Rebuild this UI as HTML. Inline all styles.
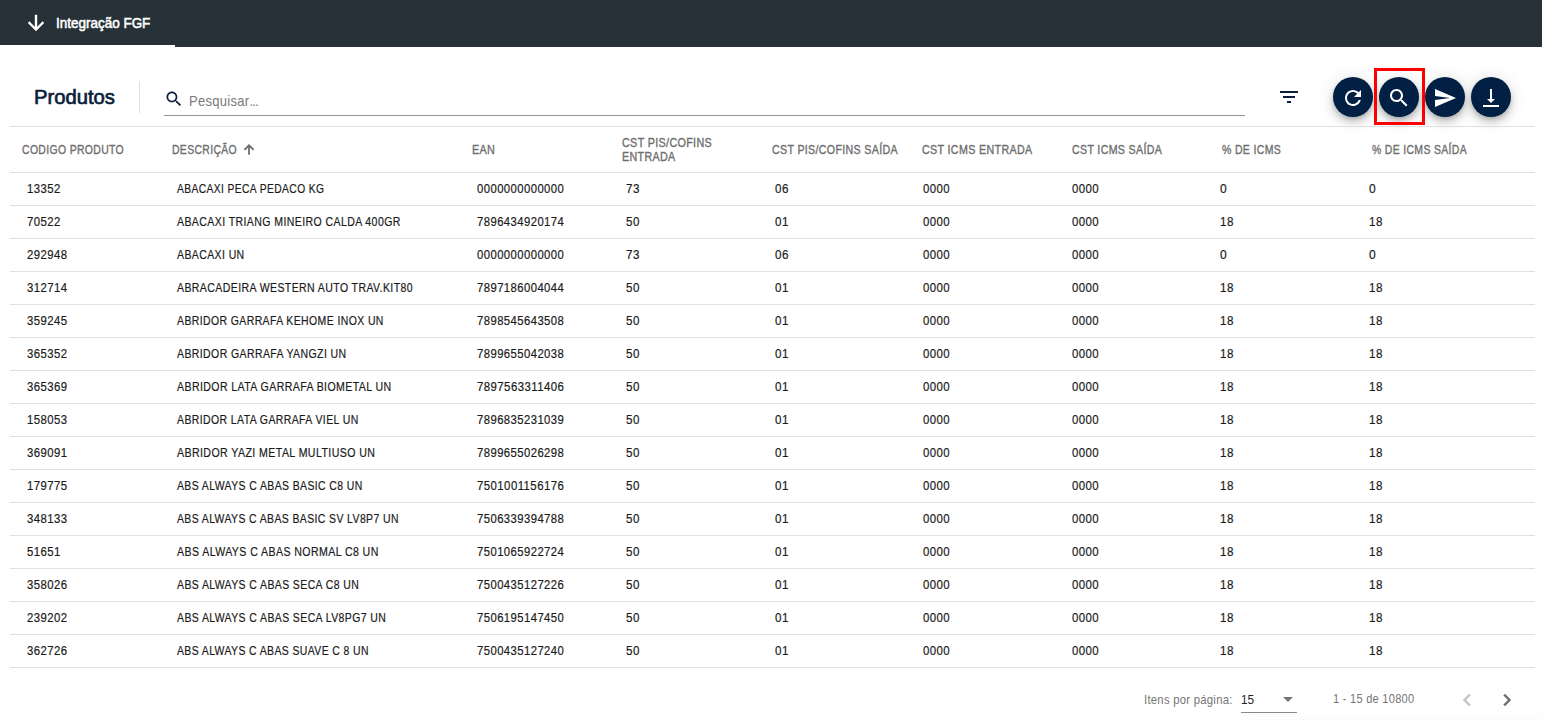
<!DOCTYPE html>
<html><head><meta charset="utf-8"><style>
html,body{margin:0;padding:0;background:#fff;width:1542px;height:721px;overflow:hidden;position:relative}
body{font-family:"Liberation Sans",sans-serif}
.t{position:absolute;white-space:nowrap;transform-origin:0 0}
.hl{position:absolute;left:10px;width:1525px;height:1px;background:#e0e0e0}
.fab{position:absolute;width:40px;height:40px;border-radius:50%;background:#012044;
box-shadow:0 3px 5px -1px rgba(0,0,0,.2),0 6px 10px 0 rgba(0,0,0,.14),0 1px 18px 0 rgba(0,0,0,.12)}
</style></head><body>
<div style="position:absolute;left:0;top:0;width:1542px;height:47px;background:#263238"></div>
<div style="position:absolute;left:0;top:45px;width:175px;height:2px;background:#fff"></div>
<svg style="position:absolute;left:24px;top:11px" width="24" height="24" viewBox="0 0 24 24"><path fill="#fff" stroke="#fff" stroke-width="0.4" d="M20 12l-1.41-1.41L13 16.17V4h-2v12.17l-5.58-5.59L4 12l8 8 8-8z"/></svg>
<div class="t" style="left:56.20px;top:14.51px;font-size:14.4px;line-height:17px;color:#fff;font-weight:normal;letter-spacing:0.0px;transform:scaleX(0.9361);-webkit-text-stroke:0.55px #fff;">Integração FGF</div>
<div class="t" style="left:34.40px;top:84.06px;font-size:20.6px;line-height:25px;color:#0a1e3c;font-weight:normal;letter-spacing:0.0px;transform:scaleX(0.9807);-webkit-text-stroke:0.7px #0a1e3c;">Produtos</div>
<div style="position:absolute;left:139px;top:81px;width:1px;height:32px;background:#e0e0e0"></div>
<svg style="position:absolute;left:164px;top:89px" width="20" height="20" viewBox="0 0 24 24"><path fill="#0b1f3d" d="M15.5 14h-.79l-.28-.27C15.41 12.59 16 11.11 16 9.5 16 5.91 13.09 3 9.5 3S3 5.91 3 9.5 5.91 16 9.5 16c1.61 0 3.09-.59 4.23-1.57l.27.28v.79l5 4.99L20.49 19l-4.99-5zm-6 0C7.01 14 5 11.99 5 9.5S7.01 5 9.5 5 14 7.01 14 9.5 11.99 14 9.5 14z"/></svg>
<div class="t" style="left:188.80px;top:92.51px;font-size:14.4px;line-height:17px;color:#7a7a7a;font-weight:normal;letter-spacing:0.3px;transform:scaleX(0.9058);">Pesquisar<span style="letter-spacing:-0.9px">..</span>.</div>
<div style="position:absolute;left:164px;top:115px;width:1081px;height:1px;background:#949494"></div>
<svg style="position:absolute;left:1277px;top:85px" width="24" height="24" viewBox="0 0 24 24"><path fill="#0b1f3d" d="M10 18h4v-2h-4v2zM3 6v2h18V6H3zm3 7h12v-2H6v2z"/></svg>
<div class="fab" style="left:1333px;top:77px"></div>
<svg style="position:absolute;left:1341px;top:86px" width="24" height="24" viewBox="0 0 24 24"><path fill="#fff" d="M17.65 6.35C16.2 4.9 14.21 4 12 4c-4.42 0-7.99 3.58-7.99 8s3.57 8 7.99 8c3.73 0 6.84-2.55 7.73-6h-2.08c-.82 2.33-3.04 4-5.65 4-3.31 0-6-2.69-6-6s2.69-6 6-6c1.66 0 3.14.69 4.22 1.78L13 11h7V4l-2.35 2.35z"/></svg>
<div class="fab" style="left:1379px;top:77px"></div>
<svg style="position:absolute;left:1387px;top:86px" width="24" height="24" viewBox="0 0 24 24"><path fill="#fff" d="M15.5 14h-.79l-.28-.27C15.41 12.59 16 11.11 16 9.5 16 5.91 13.09 3 9.5 3S3 5.91 3 9.5 5.91 16 9.5 16c1.61 0 3.09-.59 4.23-1.57l.27.28v.79l5 4.99L20.49 19l-4.99-5zm-6 0C7.01 14 5 11.99 5 9.5S7.01 5 9.5 5 14 7.01 14 9.5 11.99 14 9.5 14z"/></svg>
<div class="fab" style="left:1425px;top:77px"></div>
<svg style="position:absolute;left:1433px;top:86px" width="24" height="24" viewBox="0 0 24 24"><path fill="#fff" d="M2.01 21L23 12 2.01 3 2 10l15 2-15 2z"/></svg>
<div class="fab" style="left:1471px;top:77px"></div>
<svg style="position:absolute;left:1479px;top:86px" width="24" height="24" viewBox="0 0 24 24"><path fill="#fff" d="M16 13h-3V3h-2v10H8l4 4 4-4zM4 19v2h16v-2H4z"/></svg>
<div style="position:absolute;left:1290px;top:47px;width:252px;height:20px;background:#fff"></div>
<div style="position:absolute;left:1373.5px;top:68px;width:51px;height:56.5px;box-sizing:border-box;border:3px solid #f00"></div>
<div class="hl" style="top:126px"></div>
<div class="hl" style="top:172px"></div>
<div class="hl" style="top:205px"></div>
<div class="hl" style="top:238px"></div>
<div class="hl" style="top:271px"></div>
<div class="hl" style="top:304px"></div>
<div class="hl" style="top:337px"></div>
<div class="hl" style="top:370px"></div>
<div class="hl" style="top:403px"></div>
<div class="hl" style="top:436px"></div>
<div class="hl" style="top:469px"></div>
<div class="hl" style="top:502px"></div>
<div class="hl" style="top:535px"></div>
<div class="hl" style="top:568px"></div>
<div class="hl" style="top:601px"></div>
<div class="hl" style="top:634px"></div>
<div class="hl" style="top:667px"></div>
<div class="t" style="left:22.00px;top:142.70px;font-size:12.4px;line-height:15px;color:#6e6e6e;font-weight:normal;letter-spacing:0.4px;transform:scaleX(0.8430);-webkit-text-stroke:0.35px #6e6e6e;">CODIGO PRODUTO</div>
<div class="t" style="left:172.00px;top:142.70px;font-size:12.4px;line-height:15px;color:#6e6e6e;font-weight:normal;letter-spacing:0.4px;transform:scaleX(0.8408);-webkit-text-stroke:0.35px #6e6e6e;">DESCRIÇÃO</div>
<div class="t" style="left:472.00px;top:142.70px;font-size:12.4px;line-height:15px;color:#6e6e6e;font-weight:normal;letter-spacing:0.4px;transform:scaleX(0.8723);-webkit-text-stroke:0.35px #6e6e6e;">EAN</div>
<div class="t" style="left:622.00px;top:135.70px;font-size:12.4px;line-height:15px;color:#6e6e6e;font-weight:normal;letter-spacing:0.4px;transform:scaleX(0.8677);-webkit-text-stroke:0.35px #6e6e6e;">CST PIS/COFINS</div>
<div class="t" style="left:622.00px;top:149.70px;font-size:12.4px;line-height:15px;color:#6e6e6e;font-weight:normal;letter-spacing:0.4px;transform:scaleX(0.8642);-webkit-text-stroke:0.35px #6e6e6e;">ENTRADA</div>
<div class="t" style="left:772.00px;top:142.70px;font-size:12.4px;line-height:15px;color:#6e6e6e;font-weight:normal;letter-spacing:0.4px;transform:scaleX(0.8575);-webkit-text-stroke:0.35px #6e6e6e;">CST PIS/COFINS SAÍDA</div>
<div class="t" style="left:922.00px;top:142.70px;font-size:12.4px;line-height:15px;color:#6e6e6e;font-weight:normal;letter-spacing:0.4px;transform:scaleX(0.8631);-webkit-text-stroke:0.35px #6e6e6e;">CST ICMS ENTRADA</div>
<div class="t" style="left:1072.00px;top:142.70px;font-size:12.4px;line-height:15px;color:#6e6e6e;font-weight:normal;letter-spacing:0.4px;transform:scaleX(0.8571);-webkit-text-stroke:0.35px #6e6e6e;">CST ICMS SAÍDA</div>
<div class="t" style="left:1222.00px;top:142.70px;font-size:12.4px;line-height:15px;color:#6e6e6e;font-weight:normal;letter-spacing:0.4px;transform:scaleX(0.8482);-webkit-text-stroke:0.35px #6e6e6e;">% DE ICMS</div>
<div class="t" style="left:1372.00px;top:142.70px;font-size:12.4px;line-height:15px;color:#6e6e6e;font-weight:normal;letter-spacing:0.4px;transform:scaleX(0.8423);-webkit-text-stroke:0.35px #6e6e6e;">% DE ICMS SAÍDA</div>
<svg style="position:absolute;left:236px;top:140px" width="24" height="20" viewBox="0 0 24 20"><path fill="#6e6e6e" d="M13 3.9L18.3 9.2 16.9 10.6 13.9 7.6V14.8H12.1V7.6L9.1 10.6 7.7 9.2z"/></svg>
<div class="t" style="left:26.50px;top:180.50px;font-size:13px;line-height:16px;color:#1a1a1a;font-weight:normal;letter-spacing:0.5px;transform:scaleX(0.8753);-webkit-text-stroke:0.2px #1a1a1a;">13352</div>
<div class="t" style="left:177.00px;top:180.50px;font-size:13px;line-height:16px;color:#1a1a1a;font-weight:normal;letter-spacing:0.5px;transform:scaleX(0.7904);-webkit-text-stroke:0.2px #1a1a1a;">ABACAXI PECA PEDACO KG</div>
<div class="t" style="left:476.50px;top:180.50px;font-size:13px;line-height:16px;color:#1a1a1a;font-weight:normal;letter-spacing:0.5px;transform:scaleX(0.8683);-webkit-text-stroke:0.2px #1a1a1a;">0000000000000</div>
<div class="t" style="left:625.50px;top:180.50px;font-size:13px;line-height:16px;color:#1a1a1a;font-weight:normal;letter-spacing:0.5px;transform:scaleX(0.8928);-webkit-text-stroke:0.2px #1a1a1a;">73</div>
<div class="t" style="left:774.50px;top:180.50px;font-size:13px;line-height:16px;color:#1a1a1a;font-weight:normal;letter-spacing:0.5px;transform:scaleX(0.8928);-webkit-text-stroke:0.2px #1a1a1a;">06</div>
<div class="t" style="left:923.00px;top:180.50px;font-size:13px;line-height:16px;color:#1a1a1a;font-weight:normal;letter-spacing:0.5px;transform:scaleX(0.8781);-webkit-text-stroke:0.2px #1a1a1a;">0000</div>
<div class="t" style="left:1071.50px;top:180.50px;font-size:13px;line-height:16px;color:#1a1a1a;font-weight:normal;letter-spacing:0.5px;transform:scaleX(0.8781);-webkit-text-stroke:0.2px #1a1a1a;">0000</div>
<div class="t" style="left:1220.30px;top:180.50px;font-size:13px;line-height:16px;color:#1a1a1a;font-weight:normal;letter-spacing:0.5px;transform:scaleX(0.9237);-webkit-text-stroke:0.2px #1a1a1a;">0</div>
<div class="t" style="left:1369.30px;top:180.50px;font-size:13px;line-height:16px;color:#1a1a1a;font-weight:normal;letter-spacing:0.5px;transform:scaleX(0.9237);-webkit-text-stroke:0.2px #1a1a1a;">0</div>
<div class="t" style="left:26.50px;top:213.50px;font-size:13px;line-height:16px;color:#1a1a1a;font-weight:normal;letter-spacing:0.5px;transform:scaleX(0.8753);-webkit-text-stroke:0.2px #1a1a1a;">70522</div>
<div class="t" style="left:177.00px;top:213.50px;font-size:13px;line-height:16px;color:#1a1a1a;font-weight:normal;letter-spacing:0.5px;transform:scaleX(0.8104);-webkit-text-stroke:0.2px #1a1a1a;">ABACAXI TRIANG MINEIRO CALDA 400GR</div>
<div class="t" style="left:476.50px;top:213.50px;font-size:13px;line-height:16px;color:#1a1a1a;font-weight:normal;letter-spacing:0.5px;transform:scaleX(0.8683);-webkit-text-stroke:0.2px #1a1a1a;">7896434920174</div>
<div class="t" style="left:625.50px;top:213.50px;font-size:13px;line-height:16px;color:#1a1a1a;font-weight:normal;letter-spacing:0.5px;transform:scaleX(0.8928);-webkit-text-stroke:0.2px #1a1a1a;">50</div>
<div class="t" style="left:774.50px;top:213.50px;font-size:13px;line-height:16px;color:#1a1a1a;font-weight:normal;letter-spacing:0.5px;transform:scaleX(0.8928);-webkit-text-stroke:0.2px #1a1a1a;">01</div>
<div class="t" style="left:923.00px;top:213.50px;font-size:13px;line-height:16px;color:#1a1a1a;font-weight:normal;letter-spacing:0.5px;transform:scaleX(0.8781);-webkit-text-stroke:0.2px #1a1a1a;">0000</div>
<div class="t" style="left:1071.50px;top:213.50px;font-size:13px;line-height:16px;color:#1a1a1a;font-weight:normal;letter-spacing:0.5px;transform:scaleX(0.8781);-webkit-text-stroke:0.2px #1a1a1a;">0000</div>
<div class="t" style="left:1220.30px;top:213.50px;font-size:13px;line-height:16px;color:#1a1a1a;font-weight:normal;letter-spacing:0.5px;transform:scaleX(0.8928);-webkit-text-stroke:0.2px #1a1a1a;">18</div>
<div class="t" style="left:1369.30px;top:213.50px;font-size:13px;line-height:16px;color:#1a1a1a;font-weight:normal;letter-spacing:0.5px;transform:scaleX(0.8928);-webkit-text-stroke:0.2px #1a1a1a;">18</div>
<div class="t" style="left:26.50px;top:246.50px;font-size:13px;line-height:16px;color:#1a1a1a;font-weight:normal;letter-spacing:0.5px;transform:scaleX(0.8734);-webkit-text-stroke:0.2px #1a1a1a;">292948</div>
<div class="t" style="left:177.00px;top:246.50px;font-size:13px;line-height:16px;color:#1a1a1a;font-weight:normal;letter-spacing:0.5px;transform:scaleX(0.8073);-webkit-text-stroke:0.2px #1a1a1a;">ABACAXI UN</div>
<div class="t" style="left:476.50px;top:246.50px;font-size:13px;line-height:16px;color:#1a1a1a;font-weight:normal;letter-spacing:0.5px;transform:scaleX(0.8683);-webkit-text-stroke:0.2px #1a1a1a;">0000000000000</div>
<div class="t" style="left:625.50px;top:246.50px;font-size:13px;line-height:16px;color:#1a1a1a;font-weight:normal;letter-spacing:0.5px;transform:scaleX(0.8928);-webkit-text-stroke:0.2px #1a1a1a;">73</div>
<div class="t" style="left:774.50px;top:246.50px;font-size:13px;line-height:16px;color:#1a1a1a;font-weight:normal;letter-spacing:0.5px;transform:scaleX(0.8928);-webkit-text-stroke:0.2px #1a1a1a;">06</div>
<div class="t" style="left:923.00px;top:246.50px;font-size:13px;line-height:16px;color:#1a1a1a;font-weight:normal;letter-spacing:0.5px;transform:scaleX(0.8781);-webkit-text-stroke:0.2px #1a1a1a;">0000</div>
<div class="t" style="left:1071.50px;top:246.50px;font-size:13px;line-height:16px;color:#1a1a1a;font-weight:normal;letter-spacing:0.5px;transform:scaleX(0.8781);-webkit-text-stroke:0.2px #1a1a1a;">0000</div>
<div class="t" style="left:1220.30px;top:246.50px;font-size:13px;line-height:16px;color:#1a1a1a;font-weight:normal;letter-spacing:0.5px;transform:scaleX(0.9237);-webkit-text-stroke:0.2px #1a1a1a;">0</div>
<div class="t" style="left:1369.30px;top:246.50px;font-size:13px;line-height:16px;color:#1a1a1a;font-weight:normal;letter-spacing:0.5px;transform:scaleX(0.9237);-webkit-text-stroke:0.2px #1a1a1a;">0</div>
<div class="t" style="left:26.50px;top:279.50px;font-size:13px;line-height:16px;color:#1a1a1a;font-weight:normal;letter-spacing:0.5px;transform:scaleX(0.8734);-webkit-text-stroke:0.2px #1a1a1a;">312714</div>
<div class="t" style="left:177.00px;top:279.50px;font-size:13px;line-height:16px;color:#1a1a1a;font-weight:normal;letter-spacing:0.5px;transform:scaleX(0.8094);-webkit-text-stroke:0.2px #1a1a1a;">ABRACADEIRA WESTERN AUTO TRAV.KIT80</div>
<div class="t" style="left:476.50px;top:279.50px;font-size:13px;line-height:16px;color:#1a1a1a;font-weight:normal;letter-spacing:0.5px;transform:scaleX(0.8683);-webkit-text-stroke:0.2px #1a1a1a;">7897186004044</div>
<div class="t" style="left:625.50px;top:279.50px;font-size:13px;line-height:16px;color:#1a1a1a;font-weight:normal;letter-spacing:0.5px;transform:scaleX(0.8928);-webkit-text-stroke:0.2px #1a1a1a;">50</div>
<div class="t" style="left:774.50px;top:279.50px;font-size:13px;line-height:16px;color:#1a1a1a;font-weight:normal;letter-spacing:0.5px;transform:scaleX(0.8928);-webkit-text-stroke:0.2px #1a1a1a;">01</div>
<div class="t" style="left:923.00px;top:279.50px;font-size:13px;line-height:16px;color:#1a1a1a;font-weight:normal;letter-spacing:0.5px;transform:scaleX(0.8781);-webkit-text-stroke:0.2px #1a1a1a;">0000</div>
<div class="t" style="left:1071.50px;top:279.50px;font-size:13px;line-height:16px;color:#1a1a1a;font-weight:normal;letter-spacing:0.5px;transform:scaleX(0.8781);-webkit-text-stroke:0.2px #1a1a1a;">0000</div>
<div class="t" style="left:1220.30px;top:279.50px;font-size:13px;line-height:16px;color:#1a1a1a;font-weight:normal;letter-spacing:0.5px;transform:scaleX(0.8928);-webkit-text-stroke:0.2px #1a1a1a;">18</div>
<div class="t" style="left:1369.30px;top:279.50px;font-size:13px;line-height:16px;color:#1a1a1a;font-weight:normal;letter-spacing:0.5px;transform:scaleX(0.8928);-webkit-text-stroke:0.2px #1a1a1a;">18</div>
<div class="t" style="left:26.50px;top:312.50px;font-size:13px;line-height:16px;color:#1a1a1a;font-weight:normal;letter-spacing:0.5px;transform:scaleX(0.8734);-webkit-text-stroke:0.2px #1a1a1a;">359245</div>
<div class="t" style="left:177.00px;top:312.50px;font-size:13px;line-height:16px;color:#1a1a1a;font-weight:normal;letter-spacing:0.5px;transform:scaleX(0.8047);-webkit-text-stroke:0.2px #1a1a1a;">ABRIDOR GARRAFA KEHOME INOX UN</div>
<div class="t" style="left:476.50px;top:312.50px;font-size:13px;line-height:16px;color:#1a1a1a;font-weight:normal;letter-spacing:0.5px;transform:scaleX(0.8683);-webkit-text-stroke:0.2px #1a1a1a;">7898545643508</div>
<div class="t" style="left:625.50px;top:312.50px;font-size:13px;line-height:16px;color:#1a1a1a;font-weight:normal;letter-spacing:0.5px;transform:scaleX(0.8928);-webkit-text-stroke:0.2px #1a1a1a;">50</div>
<div class="t" style="left:774.50px;top:312.50px;font-size:13px;line-height:16px;color:#1a1a1a;font-weight:normal;letter-spacing:0.5px;transform:scaleX(0.8928);-webkit-text-stroke:0.2px #1a1a1a;">01</div>
<div class="t" style="left:923.00px;top:312.50px;font-size:13px;line-height:16px;color:#1a1a1a;font-weight:normal;letter-spacing:0.5px;transform:scaleX(0.8781);-webkit-text-stroke:0.2px #1a1a1a;">0000</div>
<div class="t" style="left:1071.50px;top:312.50px;font-size:13px;line-height:16px;color:#1a1a1a;font-weight:normal;letter-spacing:0.5px;transform:scaleX(0.8781);-webkit-text-stroke:0.2px #1a1a1a;">0000</div>
<div class="t" style="left:1220.30px;top:312.50px;font-size:13px;line-height:16px;color:#1a1a1a;font-weight:normal;letter-spacing:0.5px;transform:scaleX(0.8928);-webkit-text-stroke:0.2px #1a1a1a;">18</div>
<div class="t" style="left:1369.30px;top:312.50px;font-size:13px;line-height:16px;color:#1a1a1a;font-weight:normal;letter-spacing:0.5px;transform:scaleX(0.8928);-webkit-text-stroke:0.2px #1a1a1a;">18</div>
<div class="t" style="left:26.50px;top:345.50px;font-size:13px;line-height:16px;color:#1a1a1a;font-weight:normal;letter-spacing:0.5px;transform:scaleX(0.8734);-webkit-text-stroke:0.2px #1a1a1a;">365352</div>
<div class="t" style="left:177.00px;top:345.50px;font-size:13px;line-height:16px;color:#1a1a1a;font-weight:normal;letter-spacing:0.5px;transform:scaleX(0.8073);-webkit-text-stroke:0.2px #1a1a1a;">ABRIDOR GARRAFA YANGZI UN</div>
<div class="t" style="left:476.50px;top:345.50px;font-size:13px;line-height:16px;color:#1a1a1a;font-weight:normal;letter-spacing:0.5px;transform:scaleX(0.8683);-webkit-text-stroke:0.2px #1a1a1a;">7899655042038</div>
<div class="t" style="left:625.50px;top:345.50px;font-size:13px;line-height:16px;color:#1a1a1a;font-weight:normal;letter-spacing:0.5px;transform:scaleX(0.8928);-webkit-text-stroke:0.2px #1a1a1a;">50</div>
<div class="t" style="left:774.50px;top:345.50px;font-size:13px;line-height:16px;color:#1a1a1a;font-weight:normal;letter-spacing:0.5px;transform:scaleX(0.8928);-webkit-text-stroke:0.2px #1a1a1a;">01</div>
<div class="t" style="left:923.00px;top:345.50px;font-size:13px;line-height:16px;color:#1a1a1a;font-weight:normal;letter-spacing:0.5px;transform:scaleX(0.8781);-webkit-text-stroke:0.2px #1a1a1a;">0000</div>
<div class="t" style="left:1071.50px;top:345.50px;font-size:13px;line-height:16px;color:#1a1a1a;font-weight:normal;letter-spacing:0.5px;transform:scaleX(0.8781);-webkit-text-stroke:0.2px #1a1a1a;">0000</div>
<div class="t" style="left:1220.30px;top:345.50px;font-size:13px;line-height:16px;color:#1a1a1a;font-weight:normal;letter-spacing:0.5px;transform:scaleX(0.8928);-webkit-text-stroke:0.2px #1a1a1a;">18</div>
<div class="t" style="left:1369.30px;top:345.50px;font-size:13px;line-height:16px;color:#1a1a1a;font-weight:normal;letter-spacing:0.5px;transform:scaleX(0.8928);-webkit-text-stroke:0.2px #1a1a1a;">18</div>
<div class="t" style="left:26.50px;top:378.50px;font-size:13px;line-height:16px;color:#1a1a1a;font-weight:normal;letter-spacing:0.5px;transform:scaleX(0.8734);-webkit-text-stroke:0.2px #1a1a1a;">365369</div>
<div class="t" style="left:177.00px;top:378.50px;font-size:13px;line-height:16px;color:#1a1a1a;font-weight:normal;letter-spacing:0.5px;transform:scaleX(0.8126);-webkit-text-stroke:0.2px #1a1a1a;">ABRIDOR LATA GARRAFA BIOMETAL UN</div>
<div class="t" style="left:476.50px;top:378.50px;font-size:13px;line-height:16px;color:#1a1a1a;font-weight:normal;letter-spacing:0.5px;transform:scaleX(0.8767);-webkit-text-stroke:0.2px #1a1a1a;">7897563311406</div>
<div class="t" style="left:625.50px;top:378.50px;font-size:13px;line-height:16px;color:#1a1a1a;font-weight:normal;letter-spacing:0.5px;transform:scaleX(0.8928);-webkit-text-stroke:0.2px #1a1a1a;">50</div>
<div class="t" style="left:774.50px;top:378.50px;font-size:13px;line-height:16px;color:#1a1a1a;font-weight:normal;letter-spacing:0.5px;transform:scaleX(0.8928);-webkit-text-stroke:0.2px #1a1a1a;">01</div>
<div class="t" style="left:923.00px;top:378.50px;font-size:13px;line-height:16px;color:#1a1a1a;font-weight:normal;letter-spacing:0.5px;transform:scaleX(0.8781);-webkit-text-stroke:0.2px #1a1a1a;">0000</div>
<div class="t" style="left:1071.50px;top:378.50px;font-size:13px;line-height:16px;color:#1a1a1a;font-weight:normal;letter-spacing:0.5px;transform:scaleX(0.8781);-webkit-text-stroke:0.2px #1a1a1a;">0000</div>
<div class="t" style="left:1220.30px;top:378.50px;font-size:13px;line-height:16px;color:#1a1a1a;font-weight:normal;letter-spacing:0.5px;transform:scaleX(0.8928);-webkit-text-stroke:0.2px #1a1a1a;">18</div>
<div class="t" style="left:1369.30px;top:378.50px;font-size:13px;line-height:16px;color:#1a1a1a;font-weight:normal;letter-spacing:0.5px;transform:scaleX(0.8928);-webkit-text-stroke:0.2px #1a1a1a;">18</div>
<div class="t" style="left:26.50px;top:411.50px;font-size:13px;line-height:16px;color:#1a1a1a;font-weight:normal;letter-spacing:0.5px;transform:scaleX(0.8734);-webkit-text-stroke:0.2px #1a1a1a;">158053</div>
<div class="t" style="left:177.00px;top:411.50px;font-size:13px;line-height:16px;color:#1a1a1a;font-weight:normal;letter-spacing:0.5px;transform:scaleX(0.8058);-webkit-text-stroke:0.2px #1a1a1a;">ABRIDOR LATA GARRAFA VIEL UN</div>
<div class="t" style="left:476.50px;top:411.50px;font-size:13px;line-height:16px;color:#1a1a1a;font-weight:normal;letter-spacing:0.5px;transform:scaleX(0.8683);-webkit-text-stroke:0.2px #1a1a1a;">7896835231039</div>
<div class="t" style="left:625.50px;top:411.50px;font-size:13px;line-height:16px;color:#1a1a1a;font-weight:normal;letter-spacing:0.5px;transform:scaleX(0.8928);-webkit-text-stroke:0.2px #1a1a1a;">50</div>
<div class="t" style="left:774.50px;top:411.50px;font-size:13px;line-height:16px;color:#1a1a1a;font-weight:normal;letter-spacing:0.5px;transform:scaleX(0.8928);-webkit-text-stroke:0.2px #1a1a1a;">01</div>
<div class="t" style="left:923.00px;top:411.50px;font-size:13px;line-height:16px;color:#1a1a1a;font-weight:normal;letter-spacing:0.5px;transform:scaleX(0.8781);-webkit-text-stroke:0.2px #1a1a1a;">0000</div>
<div class="t" style="left:1071.50px;top:411.50px;font-size:13px;line-height:16px;color:#1a1a1a;font-weight:normal;letter-spacing:0.5px;transform:scaleX(0.8781);-webkit-text-stroke:0.2px #1a1a1a;">0000</div>
<div class="t" style="left:1220.30px;top:411.50px;font-size:13px;line-height:16px;color:#1a1a1a;font-weight:normal;letter-spacing:0.5px;transform:scaleX(0.8928);-webkit-text-stroke:0.2px #1a1a1a;">18</div>
<div class="t" style="left:1369.30px;top:411.50px;font-size:13px;line-height:16px;color:#1a1a1a;font-weight:normal;letter-spacing:0.5px;transform:scaleX(0.8928);-webkit-text-stroke:0.2px #1a1a1a;">18</div>
<div class="t" style="left:26.50px;top:444.50px;font-size:13px;line-height:16px;color:#1a1a1a;font-weight:normal;letter-spacing:0.5px;transform:scaleX(0.8734);-webkit-text-stroke:0.2px #1a1a1a;">369091</div>
<div class="t" style="left:177.00px;top:444.50px;font-size:13px;line-height:16px;color:#1a1a1a;font-weight:normal;letter-spacing:0.5px;transform:scaleX(0.8155);-webkit-text-stroke:0.2px #1a1a1a;">ABRIDOR YAZI METAL MULTIUSO UN</div>
<div class="t" style="left:476.50px;top:444.50px;font-size:13px;line-height:16px;color:#1a1a1a;font-weight:normal;letter-spacing:0.5px;transform:scaleX(0.8683);-webkit-text-stroke:0.2px #1a1a1a;">7899655026298</div>
<div class="t" style="left:625.50px;top:444.50px;font-size:13px;line-height:16px;color:#1a1a1a;font-weight:normal;letter-spacing:0.5px;transform:scaleX(0.8928);-webkit-text-stroke:0.2px #1a1a1a;">50</div>
<div class="t" style="left:774.50px;top:444.50px;font-size:13px;line-height:16px;color:#1a1a1a;font-weight:normal;letter-spacing:0.5px;transform:scaleX(0.8928);-webkit-text-stroke:0.2px #1a1a1a;">01</div>
<div class="t" style="left:923.00px;top:444.50px;font-size:13px;line-height:16px;color:#1a1a1a;font-weight:normal;letter-spacing:0.5px;transform:scaleX(0.8781);-webkit-text-stroke:0.2px #1a1a1a;">0000</div>
<div class="t" style="left:1071.50px;top:444.50px;font-size:13px;line-height:16px;color:#1a1a1a;font-weight:normal;letter-spacing:0.5px;transform:scaleX(0.8781);-webkit-text-stroke:0.2px #1a1a1a;">0000</div>
<div class="t" style="left:1220.30px;top:444.50px;font-size:13px;line-height:16px;color:#1a1a1a;font-weight:normal;letter-spacing:0.5px;transform:scaleX(0.8928);-webkit-text-stroke:0.2px #1a1a1a;">18</div>
<div class="t" style="left:1369.30px;top:444.50px;font-size:13px;line-height:16px;color:#1a1a1a;font-weight:normal;letter-spacing:0.5px;transform:scaleX(0.8928);-webkit-text-stroke:0.2px #1a1a1a;">18</div>
<div class="t" style="left:26.50px;top:477.50px;font-size:13px;line-height:16px;color:#1a1a1a;font-weight:normal;letter-spacing:0.5px;transform:scaleX(0.8734);-webkit-text-stroke:0.2px #1a1a1a;">179775</div>
<div class="t" style="left:177.00px;top:477.50px;font-size:13px;line-height:16px;color:#1a1a1a;font-weight:normal;letter-spacing:0.5px;transform:scaleX(0.8041);-webkit-text-stroke:0.2px #1a1a1a;">ABS ALWAYS C ABAS BASIC C8 UN</div>
<div class="t" style="left:476.50px;top:477.50px;font-size:13px;line-height:16px;color:#1a1a1a;font-weight:normal;letter-spacing:0.5px;transform:scaleX(0.8767);-webkit-text-stroke:0.2px #1a1a1a;">7501001156176</div>
<div class="t" style="left:625.50px;top:477.50px;font-size:13px;line-height:16px;color:#1a1a1a;font-weight:normal;letter-spacing:0.5px;transform:scaleX(0.8928);-webkit-text-stroke:0.2px #1a1a1a;">50</div>
<div class="t" style="left:774.50px;top:477.50px;font-size:13px;line-height:16px;color:#1a1a1a;font-weight:normal;letter-spacing:0.5px;transform:scaleX(0.8928);-webkit-text-stroke:0.2px #1a1a1a;">01</div>
<div class="t" style="left:923.00px;top:477.50px;font-size:13px;line-height:16px;color:#1a1a1a;font-weight:normal;letter-spacing:0.5px;transform:scaleX(0.8781);-webkit-text-stroke:0.2px #1a1a1a;">0000</div>
<div class="t" style="left:1071.50px;top:477.50px;font-size:13px;line-height:16px;color:#1a1a1a;font-weight:normal;letter-spacing:0.5px;transform:scaleX(0.8781);-webkit-text-stroke:0.2px #1a1a1a;">0000</div>
<div class="t" style="left:1220.30px;top:477.50px;font-size:13px;line-height:16px;color:#1a1a1a;font-weight:normal;letter-spacing:0.5px;transform:scaleX(0.8928);-webkit-text-stroke:0.2px #1a1a1a;">18</div>
<div class="t" style="left:1369.30px;top:477.50px;font-size:13px;line-height:16px;color:#1a1a1a;font-weight:normal;letter-spacing:0.5px;transform:scaleX(0.8928);-webkit-text-stroke:0.2px #1a1a1a;">18</div>
<div class="t" style="left:26.50px;top:510.50px;font-size:13px;line-height:16px;color:#1a1a1a;font-weight:normal;letter-spacing:0.5px;transform:scaleX(0.8734);-webkit-text-stroke:0.2px #1a1a1a;">348133</div>
<div class="t" style="left:177.00px;top:510.50px;font-size:13px;line-height:16px;color:#1a1a1a;font-weight:normal;letter-spacing:0.5px;transform:scaleX(0.8025);-webkit-text-stroke:0.2px #1a1a1a;">ABS ALWAYS C ABAS BASIC SV LV8P7 UN</div>
<div class="t" style="left:476.50px;top:510.50px;font-size:13px;line-height:16px;color:#1a1a1a;font-weight:normal;letter-spacing:0.5px;transform:scaleX(0.8683);-webkit-text-stroke:0.2px #1a1a1a;">7506339394788</div>
<div class="t" style="left:625.50px;top:510.50px;font-size:13px;line-height:16px;color:#1a1a1a;font-weight:normal;letter-spacing:0.5px;transform:scaleX(0.8928);-webkit-text-stroke:0.2px #1a1a1a;">50</div>
<div class="t" style="left:774.50px;top:510.50px;font-size:13px;line-height:16px;color:#1a1a1a;font-weight:normal;letter-spacing:0.5px;transform:scaleX(0.8928);-webkit-text-stroke:0.2px #1a1a1a;">01</div>
<div class="t" style="left:923.00px;top:510.50px;font-size:13px;line-height:16px;color:#1a1a1a;font-weight:normal;letter-spacing:0.5px;transform:scaleX(0.8781);-webkit-text-stroke:0.2px #1a1a1a;">0000</div>
<div class="t" style="left:1071.50px;top:510.50px;font-size:13px;line-height:16px;color:#1a1a1a;font-weight:normal;letter-spacing:0.5px;transform:scaleX(0.8781);-webkit-text-stroke:0.2px #1a1a1a;">0000</div>
<div class="t" style="left:1220.30px;top:510.50px;font-size:13px;line-height:16px;color:#1a1a1a;font-weight:normal;letter-spacing:0.5px;transform:scaleX(0.8928);-webkit-text-stroke:0.2px #1a1a1a;">18</div>
<div class="t" style="left:1369.30px;top:510.50px;font-size:13px;line-height:16px;color:#1a1a1a;font-weight:normal;letter-spacing:0.5px;transform:scaleX(0.8928);-webkit-text-stroke:0.2px #1a1a1a;">18</div>
<div class="t" style="left:26.50px;top:543.50px;font-size:13px;line-height:16px;color:#1a1a1a;font-weight:normal;letter-spacing:0.5px;transform:scaleX(0.8753);-webkit-text-stroke:0.2px #1a1a1a;">51651</div>
<div class="t" style="left:177.00px;top:543.50px;font-size:13px;line-height:16px;color:#1a1a1a;font-weight:normal;letter-spacing:0.5px;transform:scaleX(0.8146);-webkit-text-stroke:0.2px #1a1a1a;">ABS ALWAYS C ABAS NORMAL C8 UN</div>
<div class="t" style="left:476.50px;top:543.50px;font-size:13px;line-height:16px;color:#1a1a1a;font-weight:normal;letter-spacing:0.5px;transform:scaleX(0.8683);-webkit-text-stroke:0.2px #1a1a1a;">7501065922724</div>
<div class="t" style="left:625.50px;top:543.50px;font-size:13px;line-height:16px;color:#1a1a1a;font-weight:normal;letter-spacing:0.5px;transform:scaleX(0.8928);-webkit-text-stroke:0.2px #1a1a1a;">50</div>
<div class="t" style="left:774.50px;top:543.50px;font-size:13px;line-height:16px;color:#1a1a1a;font-weight:normal;letter-spacing:0.5px;transform:scaleX(0.8928);-webkit-text-stroke:0.2px #1a1a1a;">01</div>
<div class="t" style="left:923.00px;top:543.50px;font-size:13px;line-height:16px;color:#1a1a1a;font-weight:normal;letter-spacing:0.5px;transform:scaleX(0.8781);-webkit-text-stroke:0.2px #1a1a1a;">0000</div>
<div class="t" style="left:1071.50px;top:543.50px;font-size:13px;line-height:16px;color:#1a1a1a;font-weight:normal;letter-spacing:0.5px;transform:scaleX(0.8781);-webkit-text-stroke:0.2px #1a1a1a;">0000</div>
<div class="t" style="left:1220.30px;top:543.50px;font-size:13px;line-height:16px;color:#1a1a1a;font-weight:normal;letter-spacing:0.5px;transform:scaleX(0.8928);-webkit-text-stroke:0.2px #1a1a1a;">18</div>
<div class="t" style="left:1369.30px;top:543.50px;font-size:13px;line-height:16px;color:#1a1a1a;font-weight:normal;letter-spacing:0.5px;transform:scaleX(0.8928);-webkit-text-stroke:0.2px #1a1a1a;">18</div>
<div class="t" style="left:26.50px;top:576.50px;font-size:13px;line-height:16px;color:#1a1a1a;font-weight:normal;letter-spacing:0.5px;transform:scaleX(0.8734);-webkit-text-stroke:0.2px #1a1a1a;">358026</div>
<div class="t" style="left:177.00px;top:576.50px;font-size:13px;line-height:16px;color:#1a1a1a;font-weight:normal;letter-spacing:0.5px;transform:scaleX(0.8054);-webkit-text-stroke:0.2px #1a1a1a;">ABS ALWAYS C ABAS SECA C8 UN</div>
<div class="t" style="left:476.50px;top:576.50px;font-size:13px;line-height:16px;color:#1a1a1a;font-weight:normal;letter-spacing:0.5px;transform:scaleX(0.8683);-webkit-text-stroke:0.2px #1a1a1a;">7500435127226</div>
<div class="t" style="left:625.50px;top:576.50px;font-size:13px;line-height:16px;color:#1a1a1a;font-weight:normal;letter-spacing:0.5px;transform:scaleX(0.8928);-webkit-text-stroke:0.2px #1a1a1a;">50</div>
<div class="t" style="left:774.50px;top:576.50px;font-size:13px;line-height:16px;color:#1a1a1a;font-weight:normal;letter-spacing:0.5px;transform:scaleX(0.8928);-webkit-text-stroke:0.2px #1a1a1a;">01</div>
<div class="t" style="left:923.00px;top:576.50px;font-size:13px;line-height:16px;color:#1a1a1a;font-weight:normal;letter-spacing:0.5px;transform:scaleX(0.8781);-webkit-text-stroke:0.2px #1a1a1a;">0000</div>
<div class="t" style="left:1071.50px;top:576.50px;font-size:13px;line-height:16px;color:#1a1a1a;font-weight:normal;letter-spacing:0.5px;transform:scaleX(0.8781);-webkit-text-stroke:0.2px #1a1a1a;">0000</div>
<div class="t" style="left:1220.30px;top:576.50px;font-size:13px;line-height:16px;color:#1a1a1a;font-weight:normal;letter-spacing:0.5px;transform:scaleX(0.8928);-webkit-text-stroke:0.2px #1a1a1a;">18</div>
<div class="t" style="left:1369.30px;top:576.50px;font-size:13px;line-height:16px;color:#1a1a1a;font-weight:normal;letter-spacing:0.5px;transform:scaleX(0.8928);-webkit-text-stroke:0.2px #1a1a1a;">18</div>
<div class="t" style="left:26.50px;top:609.50px;font-size:13px;line-height:16px;color:#1a1a1a;font-weight:normal;letter-spacing:0.5px;transform:scaleX(0.8734);-webkit-text-stroke:0.2px #1a1a1a;">239202</div>
<div class="t" style="left:177.00px;top:609.50px;font-size:13px;line-height:16px;color:#1a1a1a;font-weight:normal;letter-spacing:0.5px;transform:scaleX(0.8054);-webkit-text-stroke:0.2px #1a1a1a;">ABS ALWAYS C ABAS SECA LV8PG7 UN</div>
<div class="t" style="left:476.50px;top:609.50px;font-size:13px;line-height:16px;color:#1a1a1a;font-weight:normal;letter-spacing:0.5px;transform:scaleX(0.8683);-webkit-text-stroke:0.2px #1a1a1a;">7506195147450</div>
<div class="t" style="left:625.50px;top:609.50px;font-size:13px;line-height:16px;color:#1a1a1a;font-weight:normal;letter-spacing:0.5px;transform:scaleX(0.8928);-webkit-text-stroke:0.2px #1a1a1a;">50</div>
<div class="t" style="left:774.50px;top:609.50px;font-size:13px;line-height:16px;color:#1a1a1a;font-weight:normal;letter-spacing:0.5px;transform:scaleX(0.8928);-webkit-text-stroke:0.2px #1a1a1a;">01</div>
<div class="t" style="left:923.00px;top:609.50px;font-size:13px;line-height:16px;color:#1a1a1a;font-weight:normal;letter-spacing:0.5px;transform:scaleX(0.8781);-webkit-text-stroke:0.2px #1a1a1a;">0000</div>
<div class="t" style="left:1071.50px;top:609.50px;font-size:13px;line-height:16px;color:#1a1a1a;font-weight:normal;letter-spacing:0.5px;transform:scaleX(0.8781);-webkit-text-stroke:0.2px #1a1a1a;">0000</div>
<div class="t" style="left:1220.30px;top:609.50px;font-size:13px;line-height:16px;color:#1a1a1a;font-weight:normal;letter-spacing:0.5px;transform:scaleX(0.8928);-webkit-text-stroke:0.2px #1a1a1a;">18</div>
<div class="t" style="left:1369.30px;top:609.50px;font-size:13px;line-height:16px;color:#1a1a1a;font-weight:normal;letter-spacing:0.5px;transform:scaleX(0.8928);-webkit-text-stroke:0.2px #1a1a1a;">18</div>
<div class="t" style="left:26.50px;top:642.50px;font-size:13px;line-height:16px;color:#1a1a1a;font-weight:normal;letter-spacing:0.5px;transform:scaleX(0.8734);-webkit-text-stroke:0.2px #1a1a1a;">362726</div>
<div class="t" style="left:177.00px;top:642.50px;font-size:13px;line-height:16px;color:#1a1a1a;font-weight:normal;letter-spacing:0.5px;transform:scaleX(0.8024);-webkit-text-stroke:0.2px #1a1a1a;">ABS ALWAYS C ABAS SUAVE C 8 UN</div>
<div class="t" style="left:476.50px;top:642.50px;font-size:13px;line-height:16px;color:#1a1a1a;font-weight:normal;letter-spacing:0.5px;transform:scaleX(0.8683);-webkit-text-stroke:0.2px #1a1a1a;">7500435127240</div>
<div class="t" style="left:625.50px;top:642.50px;font-size:13px;line-height:16px;color:#1a1a1a;font-weight:normal;letter-spacing:0.5px;transform:scaleX(0.8928);-webkit-text-stroke:0.2px #1a1a1a;">50</div>
<div class="t" style="left:774.50px;top:642.50px;font-size:13px;line-height:16px;color:#1a1a1a;font-weight:normal;letter-spacing:0.5px;transform:scaleX(0.8928);-webkit-text-stroke:0.2px #1a1a1a;">01</div>
<div class="t" style="left:923.00px;top:642.50px;font-size:13px;line-height:16px;color:#1a1a1a;font-weight:normal;letter-spacing:0.5px;transform:scaleX(0.8781);-webkit-text-stroke:0.2px #1a1a1a;">0000</div>
<div class="t" style="left:1071.50px;top:642.50px;font-size:13px;line-height:16px;color:#1a1a1a;font-weight:normal;letter-spacing:0.5px;transform:scaleX(0.8781);-webkit-text-stroke:0.2px #1a1a1a;">0000</div>
<div class="t" style="left:1220.30px;top:642.50px;font-size:13px;line-height:16px;color:#1a1a1a;font-weight:normal;letter-spacing:0.5px;transform:scaleX(0.8928);-webkit-text-stroke:0.2px #1a1a1a;">18</div>
<div class="t" style="left:1369.30px;top:642.50px;font-size:13px;line-height:16px;color:#1a1a1a;font-weight:normal;letter-spacing:0.5px;transform:scaleX(0.8928);-webkit-text-stroke:0.2px #1a1a1a;">18</div>
<div class="t" style="left:1144.00px;top:693.20px;font-size:12.4px;line-height:15px;color:#757575;font-weight:normal;letter-spacing:0.3px;transform:scaleX(0.9100);">Itens por página:</div>
<div class="t" style="left:1240.50px;top:692.80px;font-size:12.4px;line-height:15px;color:#1f1f1f;font-weight:normal;letter-spacing:0.0px;transform:scaleX(0.9525);">15</div>
<svg style="position:absolute;left:1283px;top:697px" width="10" height="5" viewBox="0 0 10 5"><path fill="#757575" d="M0 0h10L5 5z"/></svg>
<div style="position:absolute;left:1238px;top:731px;width:420px;height:60px;border-radius:8px;box-shadow:0 0 22px rgba(0,0,0,.09)"></div>
<div style="position:absolute;left:1241px;top:712px;width:56px;height:1px;background:#8a8a8a"></div>
<div class="t" style="left:1333.00px;top:692.20px;font-size:12.4px;line-height:15px;color:#757575;font-weight:normal;letter-spacing:0.3px;transform:scaleX(0.8913);">1 - 15 de 10800</div>
<svg style="position:absolute;left:1454.5px;top:687.5px" width="24" height="24" viewBox="0 0 24 24"><path fill="#c4c4c4" stroke="#c4c4c4" stroke-width="0.5" d="M15.41 7.41L14 6l-6 6 6 6 1.41-1.41L10.83 12z"/></svg>
<svg style="position:absolute;left:1494.5px;top:687.5px" width="24" height="24" viewBox="0 0 24 24"><path fill="#707070" stroke="#707070" stroke-width="0.5" d="M10 6L8.59 7.41 13.17 12l-4.58 4.59L10 18l6-6z"/></svg>
</body></html>
